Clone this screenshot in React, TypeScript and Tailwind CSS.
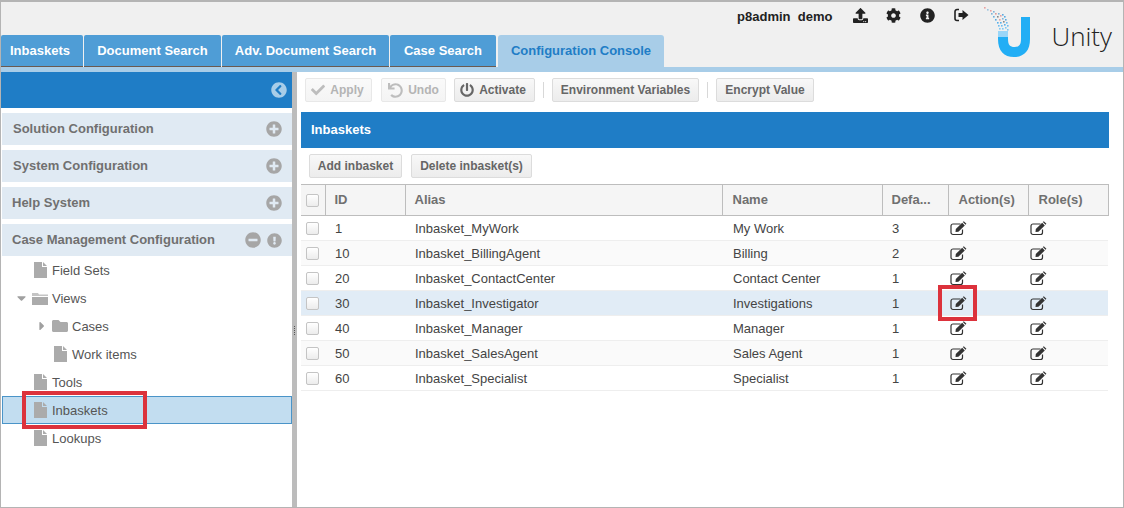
import {
  FaUpload,
  FaCog,
  FaInfoCircle,
  FaCheck,
  FaUndo,
  FaPowerOff,
  FaChevronCircleLeft,
  FaPlusCircle,
  FaMinusCircle,
  FaExclamationCircle,
  FaFolder,
  FaCaretDown,
  FaCaretRight,
} from 'react-icons/fa';

const tabs = [
  { label: 'Inbaskets', w: 'w-[82px]', pad: 'pl-[9px]' },
  { label: 'Document Search', w: 'w-[137px]', pad: 'justify-center' },
  { label: 'Adv. Document Search', w: 'w-[167px]', pad: 'justify-center' },
  { label: 'Case Search', w: 'w-[106px]', pad: 'justify-center' },
];

const sections = [
  { label: 'Solution Configuration', pad: 'pl-[11px]' },
  { label: 'System Configuration', pad: 'pl-[11px]' },
  { label: 'Help System', pad: 'pl-[10px]' },
];

const headers = [
  { label: 'ID', pad: 'pl-[9px]' },
  { label: 'Alias', pad: 'pl-[9px]' },
  { label: 'Name', pad: 'pl-[10px]' },
  { label: 'Defa...', pad: 'pl-[9px]' },
  { label: 'Action(s)', pad: 'pl-[10px]' },
  { label: 'Role(s)', pad: 'pl-[10px]' },
];

const rows = [
  { id: '1', alias: 'Inbasket_MyWork', name: 'My Work', def: '3' },
  { id: '10', alias: 'Inbasket_BillingAgent', name: 'Billing', def: '2' },
  { id: '20', alias: 'Inbasket_ContactCenter', name: 'Contact Center', def: '1' },
  { id: '30', alias: 'Inbasket_Investigator', name: 'Investigations', def: '1' },
  { id: '40', alias: 'Inbasket_Manager', name: 'Manager', def: '1' },
  { id: '50', alias: 'Inbasket_SalesAgent', name: 'Sales Agent', def: '1' },
  { id: '60', alias: 'Inbasket_Specialist', name: 'Specialist', def: '1' },
];

function Logo() {
  const dots = [
    [0, 0, '#e8a0a0'], [3, 2, '#9cc4e0'], [6, 3, '#e8a0a0'], [9, 4, '#7fb4d8'], [7, 6, '#7fb4d8'],
    [11, 6, '#dd9999'], [14, 6, '#7fb4d8'], [9, 9, '#6aaedc'], [13, 9, '#888888'], [16, 8, '#e8a0a0'],
    [18, 7, '#5aaae0'], [20, 9, '#5aaae0'], [11, 12, '#5aaae0'], [15, 12, '#e8a0a0'], [18, 11, '#7fb4d8'],
    [21, 12, '#5aaae0'], [13, 15, '#58b0ea'], [16, 15, '#58b0ea'], [19, 14, '#888888'], [22, 15, '#6cbcf0'],
    [14, 18, '#6cbcf0'], [17, 18, '#6cbcf0'], [20, 17, '#58b0ea'], [23, 18, '#6cbcf0'], [15, 21, '#7cc8f4'],
    [18, 21, '#7cc8f4'], [21, 20, '#7cc8f4'], [23, 22, '#7cc8f4'],
  ] as const;
  return (
    <svg width="48" height="52" viewBox="0 0 48 52" className="shrink-0">
      {dots.map(([x, y, c], i) => (
        <rect key={i} x={x} y={y} width="1.6" height="1.6" fill={c} />
      ))}
      <path d="M14 24 L24 24 L24 32 L14 32 Z" fill="#9ad6f8" />
      <path
        d="M14 30 L24 30 L24 32 C24 38 26 40 30.5 40 C35 40 37 38 37 32 L37 10 L46 10 L46 32 C46 44 40 50 30 50 C20 50 14 44 14 32 Z"
        fill="#22aef5"
      />
    </svg>
  );
}

function SignOutIcon() {
  return (
    <svg width="15" height="14" viewBox="0 0 15 14" className="shrink-0 mt-[8px]">
      <path d="M5 1.5 H3 A2 2 0 0 0 1 3.5 V10.5 A2 2 0 0 0 3 12.5 H5" fill="none" stroke="#222222" strokeWidth="1.6" />
      <path d="M4.5 5 H8.5 V2 L14.5 7 L8.5 12 V9 H4.5 Z" fill="#222222" />
    </svg>
  );
}

function EditIcon() {
  return (
    <svg width="17" height="15" viewBox="0 0 17 15" className="ml-[1px] block">
      <path d="M12.5 8.5 V11.5 A2 2 0 0 1 10.5 13.5 H3 A2 2 0 0 1 1 11.5 V5 A2 2 0 0 1 3 3 H10.5" fill="none" stroke="#333333" strokeWidth="1.2" />
      <path d="M5.5 11 L5.8 8 L12.2 1.8 L14.8 4.4 L8.4 10.7 Z" fill="#333333" />
      <path d="M12.9 1.1 L13.8 0.2 L16.4 2.8 L15.5 3.7 Z" fill="#333333" />
    </svg>
  );
}

function FileIcon() {
  return (
    <svg width="13" height="16" viewBox="0 0 13 16" className="block">
      <path d="M0 0 H8 V5 H13 V16 H0 Z" fill="#ababab" />
      <path d="M9 0 L13 4 H9 Z" fill="#ababab" />
    </svg>
  );
}

function FolderOpenIcon() {
  return (
    <svg width="16" height="13" viewBox="0 0 16 13" className="block">
      <path d="M0 1 H6 L7 2.5 H16 V4 H0 Z" fill="#c4c4c4" />
      <path d="M0 5 H16 V13 H0 Z" fill="#ababab" />
    </svg>
  );
}

function Button({ children, disabled, className }: { children: React.ReactNode; disabled?: boolean; className: string }) {
  return (
    <div
      className={`h-6 flex items-center justify-center gap-[5px] rounded-[2px] border text-[12px] font-bold bg-gradient-to-b ${
        disabled
          ? 'border-[#e8e8e8] from-[#fafafa] to-[#f4f4f4] text-[#b4b4b4]'
          : 'border-[#dcdcdc] from-[#f8f8f8] to-[#ececec] text-[#666666]'
      } ${className}`}
    >
      {children}
    </div>
  );
}

function Checkbox() {
  return <span className="block w-[13px] h-[13px] rounded-[2px] border border-[#c4c4c4] bg-gradient-to-b from-white to-[#ececec]" />;
}

function TreeRow({ label, indent, selected }: { label: string; indent: string; selected?: boolean }) {
  return (
    <div
      className={`h-7 flex items-center text-[13px] text-[#555555] ${indent} ${
        selected ? 'bg-[#c2ddf0] outline outline-1 -outline-offset-1 outline-[#4a94c8]' : ''
      }`}
    >
      <span className="w-[18px] shrink-0">
        <FileIcon />
      </span>
      <span className="pt-px">{label}</span>
    </div>
  );
}

export default function App() {
  return (
    <div
      className="relative w-[1124px] h-[508px] overflow-hidden bg-white border-t-2 border-l border-r border-b border-[#b4b4b4] flex flex-col"
      style={{ fontFamily: '"Liberation Sans", Arial, sans-serif' }}
    >
      {/* header */}
      <div className="h-[70px] shrink-0 bg-[#f0f0f0] relative flex flex-col justify-end border-b-[5px] border-[#a8cde8]">
        <div className="absolute right-0 top-0 h-[65px] flex items-start">
          <span className="mt-[7px] leading-[16px] text-[13px] font-bold text-[#222222] mr-[21px]">p8admin&nbsp; demo</span>
          <FaUpload className="mt-[6px] text-[15px] text-[#222222] mr-[18px]" />
          <FaCog className="mt-[6px] text-[15px] text-[#222222] mr-[19px]" />
          <FaInfoCircle className="mt-[6px] text-[15px] text-[#222222] mr-[19px]" />
          <span className="mr-[15px] -mt-[2px]">
            <SignOutIcon />
          </span>
          <div className="mt-[5px] mr-[19px]">
            <Logo />
          </div>
          <span className="mt-[16px] mr-[11px] text-[26px] leading-[36px] font-light text-[#222222]" style={{ fontFamily: '"Open Sans", sans-serif' }}>
            Unity
          </span>
        </div>
        <div className="flex items-end h-[32px] gap-px">
          {tabs.map(t => (
            <div key={t.label} className={`${t.w} ${t.pad} h-[32px] flex items-center bg-[#4f9dd6] border-b border-[#6b5a50] rounded-t-[2px] text-[13px] font-bold text-white`}>
              {t.label}
            </div>
          ))}
          <div className="w-[166px] ml-px h-[32px] flex items-center justify-center bg-[#a8cde8] rounded-t-[3px] text-[13px] font-bold text-[#1f7dc6]">
            Configuration Console
          </div>
        </div>
      </div>

      <div className="flex-1 flex min-h-0">
        {/* left panel */}
        <div className="w-[291px] shrink-0 flex flex-col">
          <div className="h-[36px] shrink-0 bg-[#1f7dc6] flex items-center justify-end pr-[5px]">
            <FaChevronCircleLeft className="text-[16px] text-[#a8cde8]" />
          </div>
          <div className="flex flex-col gap-[5px] mt-[5px] pl-px">
            {sections.map(s => (
              <div key={s.label} className={`h-[32px] bg-[#e0eaf3] flex items-center justify-between ${s.pad} pr-[10px] text-[13px] font-bold text-[#707070]`}>
                {s.label}
                <FaPlusCircle className="text-[16px] text-[#a6a6a6]" />
              </div>
            ))}
            <div className="h-[32px] bg-[#e0eaf3] flex items-center pl-[10px] pr-[10px] text-[13px] font-bold text-[#707070]">
              <span className="flex-1">Case Management Configuration</span>
              <FaMinusCircle className="text-[16px] text-[#a6a6a6]" />
              <FaExclamationCircle className="text-[15px] text-[#a6a6a6] ml-[6px]" />
            </div>
          </div>
          <div className="pl-px">
            <TreeRow label="Field Sets" indent="pl-[32px]" />
            <div className="h-7 flex items-center text-[13px] text-[#555555] pl-[15px]">
              <FaCaretDown className="text-[14px] text-[#a0a0a0] mr-[6px] w-[9px]" />
              <span className="mr-[4px]">
                <FolderOpenIcon />
              </span>
              <span className="pt-px">Views</span>
            </div>
            <div className="h-7 flex items-center text-[13px] text-[#555555] pl-[37px]">
              <FaCaretRight className="text-[14px] text-[#a0a0a0] mr-[7px] w-[6px]" />
              <FaFolder className="text-[16px] text-[#ababab] mr-[4px]" />
              <span className="pt-px">Cases</span>
            </div>
            <TreeRow label="Work items" indent="pl-[52px]" />
            <TreeRow label="Tools" indent="pl-[32px]" />
            <TreeRow label="Inbaskets" indent="pl-[32px]" selected />
            <TreeRow label="Lookups" indent="pl-[32px]" />
          </div>
        </div>

        {/* splitter */}
        <div className="w-[5px] shrink-0 bg-[#bcbcbc] pt-[254px] flex justify-center">
          <div className="w-px h-[9px] border-l border-dotted border-[#555555]" />
        </div>

        {/* right panel */}
        <div className="flex-1 min-w-0 pl-[4px] pr-[14px]">
          <div className="flex items-center h-6 mt-[6px] pl-[4px]">
            <Button disabled className="w-[67px] pr-[2px]">
              <FaCheck className="text-[14px] text-[#bdbdbd]" /> Apply
            </Button>
            <Button disabled className="w-[65px] ml-[9px]">
              <FaUndo className="text-[15px] text-[#bdbdbd]" /> Undo
            </Button>
            <Button className="w-[81px] ml-[8px] pr-[3px]">
              <FaPowerOff className="text-[14px] text-[#666666]" /> Activate
            </Button>
            <span className="w-px h-4 bg-[#d8d8d8] mx-[8px]" />
            <Button className="w-[147px]">Environment Variables</Button>
            <span className="w-px h-4 bg-[#d8d8d8] mx-[8px]" />
            <Button className="w-[98px]">Encrypt Value</Button>
          </div>
          <div className="h-[36px] mt-[10px] bg-[#1f7dc6] flex items-center pl-[10px] text-[13px] font-bold text-white">Inbaskets</div>
          <div className="flex gap-[9px] mt-[6px] pl-[8px]">
            <Button className="w-[93px]">Add inbasket</Button>
            <Button className="w-[121px]">Delete inbasket(s)</Button>
          </div>
          <table className="mt-[6px] w-[807px] table-fixed border-collapse text-[13px] text-[#444444]">
            <colgroup>
              <col className="w-[24px]" />
              <col className="w-[80px]" />
              <col className="w-[317px]" />
              <col className="w-[160px]" />
              <col className="w-[66px]" />
              <col className="w-[80px]" />
              <col className="w-[80px]" />
            </colgroup>
            <thead>
              <tr className="h-[31px] bg-[#f5f5f5] border-t border-b border-[#bdbdbd] text-left font-bold text-[#707070]">
                <th className="pl-[5px]">
                  <Checkbox />
                </th>
                {headers.map(h => (
                  <th key={h.label} className={`${h.pad} border-l border-[#bdbdbd] last:border-r font-bold`}>
                    {h.label}
                  </th>
                ))}
              </tr>
            </thead>
            <tbody>
              {rows.map((r, i) => (
                <tr key={r.id} className={`h-[25px] border-b border-[#eeeeee] ${r.id === '30' ? 'bg-[#e1ecf6]' : i % 2 ? 'bg-[#fafafa]' : 'bg-white'}`}>
                  <td className="pl-[5px]">
                    <Checkbox />
                  </td>
                  <td className="pl-[10px] pt-px">{r.id}</td>
                  <td className="pl-[10px] pt-px">{r.alias}</td>
                  <td className="pl-[11px] pt-px">{r.name}</td>
                  <td className="pl-[10px] pt-px">{r.def}</td>
                  <td className="pl-[1px]">
                    <EditIcon />
                  </td>
                  <td className="pl-[1px]">
                    <EditIcon />
                  </td>
                </tr>
              ))}
            </tbody>
          </table>
        </div>
      </div>

      {/* red annotation boxes */}
      <div className="absolute left-[21px] top-[389px] w-[125px] h-[38px] border-4 border-[#dc323c]" />
      <div className="absolute left-[937px] top-[283px] w-[39px] h-[36px] border-4 border-[#dc323c]" />
    </div>
  );
}
